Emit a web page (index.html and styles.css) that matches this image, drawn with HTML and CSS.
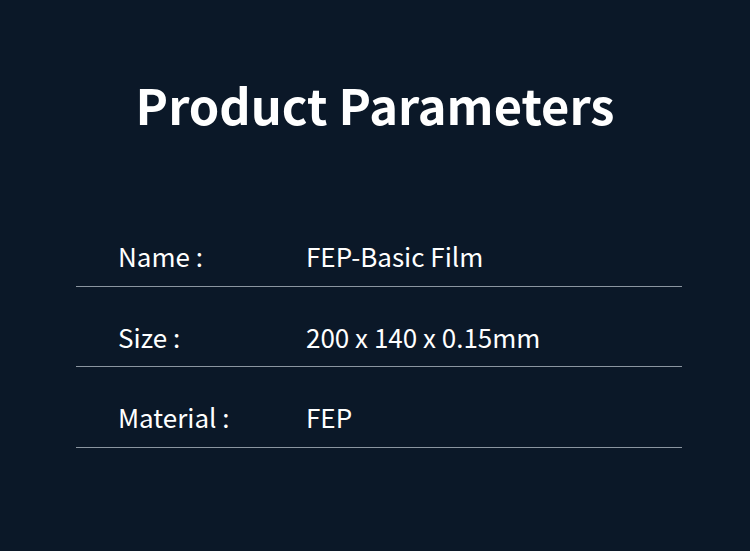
FILE: index.html
```html
<!DOCTYPE html>
<html>
<head>
<meta charset="utf-8">
<link rel="stylesheet" href="styles.css">
</head>
<body>
<main class="page">
  <h1 class="title">Product Parameters</h1>
  <div class="table">
    <div class="row"><span class="label">Name :</span><span class="value">FEP-Basic Film</span></div>
    <div class="row"><span class="label">Size :</span><span class="value">200 x 140 x 0.15mm</span></div>
    <div class="row"><span class="label">Material :</span><span class="value">FEP</span></div>
  </div>
</main>
</body>
</html>
```
FILE: styles.css
```css
html, body {
  margin: 0;
  padding: 0;
  background: #0b1828;
}
.page {
  width: 750px;
  height: 551px;
  box-sizing: border-box;
  padding-top: 72px;
  font-family: "Noto Sans CJK SC", "Noto Sans", sans-serif;
  color: #ffffff;
}
.title {
  margin: 0;
  text-align: center;
  font-size: 48.8px;
  font-weight: 700;
  line-height: 64px;
}
.table {
  margin: 70px 68px 0 76px;
}
.row {
  display: flex;
  align-items: center;
  height: 80.5px;
  box-sizing: border-box;
  border-bottom: 1px solid #8b95a0;
  font-size: 26px;
  padding-top: 20px;
}
.label {
  width: 188px;
  padding-left: 42px;
}
```
